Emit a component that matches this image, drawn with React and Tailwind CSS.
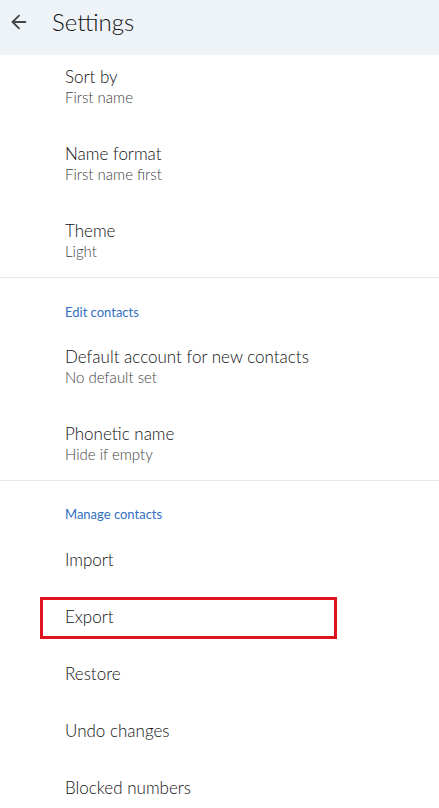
import React from 'react';
import { ArrowLeft } from 'lucide-react';

const font = { fontFamily: 'Lato, "Noto Sans", sans-serif' };

const TwoLine = ({ title, sub, first, last }) => (
    <div className={`pl-[65px] ${first ? 'pt-[11px]' : 'pt-[18px]'} ${last ? 'pb-[16px]' : 'pb-[18px]'}`}>
        <div className="text-[17px] leading-[21px] font-light text-[#111111]">{title}</div>
        <div className="text-[15px] leading-[20px] font-light text-[#3f3f3f]">{sub}</div>
    </div>
);

const OneLine = ({ title, marked }) => (
    <div className="relative pl-[65px] py-[18px]">
        <div className="text-[17px] leading-[21px] font-light text-[#111111]">{title}</div>
        {marked && (
            <div className="absolute left-[40px] top-[9px] w-[297px] h-[42px] border-[3px] border-[#e0141e]" />
        )}
    </div>
);

const SectionLabel = ({ children, spacing }) => (
    <div className={`pl-[65px] ${spacing} text-[13px] leading-[16px] text-[#3370bf]`}>{children}</div>
);

const App = () => {
    return (
        <div className="w-[439px] h-[808px] overflow-hidden bg-white" style={font}>
            {/* App bar */}
            <div className="h-[55px] bg-[#eef3f8] flex items-start pt-[7px]">
                <ArrowLeft size={22} strokeWidth={2} className="ml-[8px] mt-[4px] text-[#454545]" />
                <span className="ml-[22px] text-[24px] leading-[30px] font-light text-[#111111]">Settings</span>
            </div>

            <TwoLine title="Sort by" sub="First name" first />
            <TwoLine title="Name format" sub="First name first" />
            <TwoLine title="Theme" sub="Light" last />

            <div className="h-px bg-[#e6e6e6]" />

            <SectionLabel spacing="pt-[26px] pb-[8px]">Edit contacts</SectionLabel>
            <TwoLine title="Default account for new contacts" sub="No default set" />
            <TwoLine title="Phonetic name" sub="Hide if empty" last />

            <div className="h-px bg-[#e6e6e6]" />

            <SectionLabel spacing="pt-[25px] pb-[9px]">Manage contacts</SectionLabel>
            <OneLine title="Import" />
            <OneLine title="Export" marked />
            <OneLine title="Restore" />
            <OneLine title="Undo changes" />
            <OneLine title="Blocked numbers" />
        </div>
    );
};

export default App;
